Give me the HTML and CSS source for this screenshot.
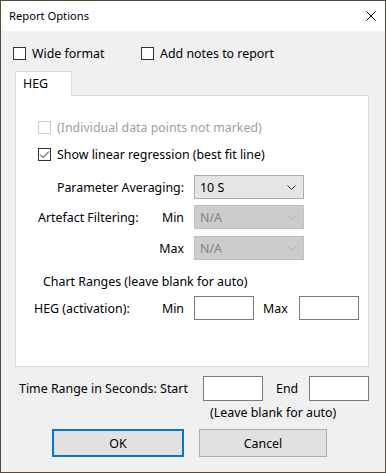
FILE: index.html
```html
<!DOCTYPE html>
<html lang="en">
  <head>
    <meta charset="UTF-8" />
    <title>Report Options</title>
    <link rel="stylesheet" href="styles.css">
  </head>
  <body>
    <div class="window">
      <div class="titlebar">
        <span class="title">Report Options</span>
        <svg class="close" width="10" height="10" viewBox="0 0 10 10">
          <path d="M0.5 0.5 L9.5 9.5 M9.5 0.5 L0.5 9.5" stroke="#000" stroke-width="1" />
        </svg>
      </div>

      <div class="content">
        <div class="top-checks">
          <label class="check wide"><span class="box"></span>Wide format</label>
          <label class="check"><span class="box"></span>Add notes to report</label>
        </div>

        <div class="tabs">
          <div class="tab">HEG</div>
        </div>

        <div class="panel">
          <label class="check disabled row-1"><span class="box"></span>(Individual data points not marked)</label>
          <label class="check row-2">
            <span class="box">
              <svg width="11" height="11" viewBox="0 0 11 11">
                <path d="M1 5.5 L4 8.5 L10 2.5" fill="none" stroke="#222" stroke-width="1" />
              </svg>
            </span>
            Show linear regression (best fit line)
          </label>

          <div class="field row-3">
            <div class="labels"><span>Parameter Averaging:</span></div>
            <div class="combo">
              <span>10 S</span>
              <svg width="9" height="5" viewBox="0 0 9 5"><path d="M0.5 0.5 L4.5 4.5 L8.5 0.5" fill="none" stroke="#333" /></svg>
            </div>
          </div>

          <div class="field row-4">
            <div class="labels artefact"><span>Artefact Filtering:</span><span>Min</span></div>
            <div class="combo off">
              <span>N/A</span>
              <svg width="9" height="5" viewBox="0 0 9 5"><path d="M0.5 0.5 L4.5 4.5 L8.5 0.5" fill="none" stroke="#b0b0b0" /></svg>
            </div>
          </div>

          <div class="field row-5">
            <div class="labels"><span>Max</span></div>
            <div class="combo off">
              <span>N/A</span>
              <svg width="9" height="5" viewBox="0 0 9 5"><path d="M0.5 0.5 L4.5 4.5 L8.5 0.5" fill="none" stroke="#b0b0b0" /></svg>
            </div>
          </div>

          <div class="chart-title">Chart Ranges (leave blank for auto)</div>

          <div class="field row-7">
            <div class="labels heg"><span>HEG (activation):</span><span>Min</span></div>
            <div class="text-box"></div>
            <span class="max-label">Max</span>
            <div class="text-box"></div>
          </div>
        </div>

        <div class="time-row">
          <span class="time-label">Time Range in Seconds: Start</span>
          <div class="text-box"></div>
          <span class="end-label">End</span>
          <div class="text-box"></div>
        </div>
        <div class="hint">(Leave blank for auto)</div>

        <div class="buttons">
          <button class="btn default">OK</button>
          <button class="btn cancel">Cancel</button>
        </div>
      </div>
    </div>
  </body>
</html>
```

FILE: styles.css
```css
* {
  box-sizing: border-box;
}
body {
  margin: 0;
  font-family: "Noto Sans", "Open Sans", sans-serif;
  font-size: 12.4px;
  color: #000;
}
.window {
  width: 386px;
  height: 473px;
  border: 1px solid #5a4a33;
  display: flex;
  flex-direction: column;
  background: #f0f0f0;
}
.titlebar {
  height: 30px;
  background: #fff;
  display: flex;
  align-items: center;
  justify-content: space-between;
  padding: 0 9px 0 8px;
}
.title {
  margin-top: -1px;
  font-size: 11.2px;
}
.close {
  margin-top: -1px;
}
.content {
  flex: 1;
}
.top-checks {
  display: flex;
  height: 20px;
  margin-top: 12px;
  padding-left: 12px;
}
.check {
  display: flex;
  align-items: center;
  gap: 6px;
  height: 20px;
  white-space: nowrap;
}
.check.wide {
  width: 128px;
}
.box {
  width: 13px;
  height: 13px;
  border: 1px solid #333;
  background: #fff;
  display: flex;
  align-items: center;
  justify-content: center;
  flex: none;
}
.check.disabled {
  color: #a0a0a0;
}
.check.disabled .box {
  border-color: #cccccc;
}
.tabs {
  display: flex;
  margin: 8px 0 0 14px;
}
.tab {
  position: relative;
  z-index: 1;
  width: 57px;
  height: 25px;
  margin-bottom: -1px;
  padding: 3px 0 0 7px;
  background: #fff;
  border: 1px solid #d9d9d9;
  border-bottom: none;
}
.panel {
  width: 354px;
  height: 272px;
  margin-left: 14px;
  background: #fff;
  border: 1px solid #d9d9d9;
  padding-top: 21px;
}
.panel .check {
  margin-left: 22px;
}
.row-2 {
  margin-top: 7px;
}
.field {
  display: flex;
  align-items: center;
  height: 24px;
}
.row-3 {
  margin-top: 11px;
}
.row-4 {
  margin-top: 6px;
}
.row-5 {
  margin-top: 7px;
}
.row-7 {
  margin-top: 4px;
}
.labels {
  width: 168px;
  margin-right: 10px;
  display: flex;
  justify-content: flex-end;
}
.labels.artefact {
  justify-content: space-between;
  padding-left: 22px;
}
.labels.heg {
  justify-content: space-between;
  padding-left: 18px;
}
.combo {
  width: 110px;
  height: 24px;
  background: #e5e5e5;
  border: 1px solid #adadad;
  display: flex;
  align-items: center;
  justify-content: space-between;
  padding: 0 7px 0 5px;
}
.combo.off {
  background: #cccccc;
  border-color: #bfbfbf;
  color: #838383;
}
.chart-title {
  height: 20px;
  line-height: 20px;
  margin: 12px 0 0 27px;
}
.text-box {
  width: 60px;
  height: 24px;
  background: #fff;
  border: 1px solid #7a7a7a;
  flex: none;
}
.max-label {
  width: 45px;
  padding-left: 9px;
}
.time-row {
  display: flex;
  align-items: center;
  height: 25px;
  margin-top: 9px;
  padding-left: 18px;
}
.time-row .text-box {
  height: 25px;
}
.time-label {
  width: 184px;
  white-space: nowrap;
}
.end-label {
  width: 46px;
  padding-left: 13px;
}
.hint {
  height: 16px;
  line-height: 16px;
  margin: 4px 0 0 209px;
}
.buttons {
  display: flex;
  gap: 15px;
  margin: 8px 0 0 51px;
}
.btn {
  height: 28px;
  font-family: inherit;
  font-size: 12.4px;
  color: #000;
  background: #e1e1e1;
  border: 1px solid #adadad;
  padding: 0;
}
.btn.default {
  width: 132px;
  border: 2px solid #0078d7;
}
.btn.cancel {
  width: 128px;
}
```
